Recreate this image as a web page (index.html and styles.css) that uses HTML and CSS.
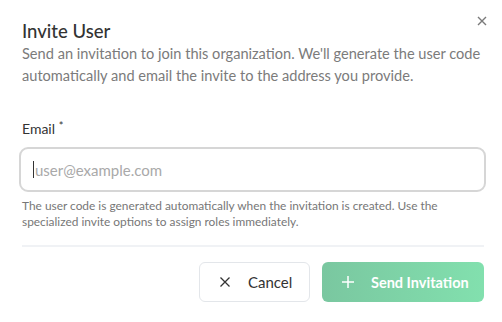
FILE: index.html
```html
<!DOCTYPE html>
<html>
<head>
<meta charset="utf-8">
<link rel="stylesheet" href="styles.css">
</head>
<body>
<div class="dialog">
  <button class="close" aria-label="Close">
    <svg width="10" height="10" viewBox="0 0 10 10"><path d="M1 1L9 9M9 1L1 9" stroke="#7a7a7a" stroke-width="1.4" fill="none"/></svg>
  </button>
  <h2 class="title">Invite User</h2>
  <p class="desc">Send an invitation to join this organization. We'll generate the user code automatically and email the invite to the address you provide.</p>
  <label class="label">Email <span class="req">*</span></label>
  <div class="input"><span class="caret"></span><span class="ph">user@example.com</span></div>
  <p class="hint">The user code is generated automatically when the invitation is created. Use the specialized invite options to assign roles immediately.</p>
  <div class="divider"></div>
  <div class="actions">
    <button class="btn cancel">
      <svg width="12" height="12" viewBox="0 0 12 12"><path d="M1.5 1.5L10.5 10.5M10.5 1.5L1.5 10.5" stroke="#333" stroke-width="1.3" fill="none"/></svg>
      <span>Cancel</span>
    </button>
    <button class="btn send">
      <svg width="14" height="14" viewBox="0 0 14 14"><path d="M7 1V13M1 7H13" stroke="#fff" stroke-width="1.5" fill="none"/></svg>
      <span>Send Invitation</span>
    </button>
  </div>
</div>
</body>
</html>
```
FILE: styles.css
```css
* { box-sizing: border-box; }
html, body { margin: 0; padding: 0; background: #fff; }
body { font-family: Lato, "Open Sans", sans-serif; color: #333; }
.dialog { position: relative; width: 502px; height: 322px; padding: 20px 18px 0 22px; }
.close { position: absolute; top: 15px; right: 14px; border: 0; background: none; padding: 0; width: 12px; height: 12px; display: flex; align-items: center; justify-content: center; }
.title { margin: 0; font-size: 18.5px; font-weight: 500; line-height: 22px; color: #333; }
.desc { margin: 1px 0 0; font-size: 14.6px; line-height: 22px; color: #7b7b7b; font-weight: 400; }
.label { display: block; margin-top: 33px; font-size: 14px; line-height: 18px; height: 18px; color: #333; }
.req { font-size: 11px; position: relative; top: -4px; }
.input { margin: 9px -2px 0 -3px; height: 45px; border: 2px solid #d6d6d6; border-radius: 9px; display: flex; align-items: center; padding-left: 12px; }
.caret { width: 1px; height: 17px; background: #333; margin-right: 1px; }
.ph { font-size: 15px; color: #a9a9a9; }
.hint { margin: 6px 0 0; font-size: 11.9px; line-height: 16px; color: #777; }
.divider { margin-top: 15px; height: 2px; background: #f0f2f5; }
.actions { display: flex; justify-content: flex-end; gap: 12px; margin-top: 15px; }
.btn { height: 40px; border-radius: 6px; display: flex; align-items: center; font-family: Lato, sans-serif; font-size: 15px; }
.cancel { width: 111px; background: #fff; border: 1px solid #e3e6ea; color: #333; padding: 0 0 0 19px; gap: 17px; }
.send { width: 162px; border: 0; background: linear-gradient(90deg, #7ac7a0, #82e0ae); color: #fff; padding: 0 0 0 19px; gap: 16px; font-weight: 700; font-size: 14.5px; }
```
